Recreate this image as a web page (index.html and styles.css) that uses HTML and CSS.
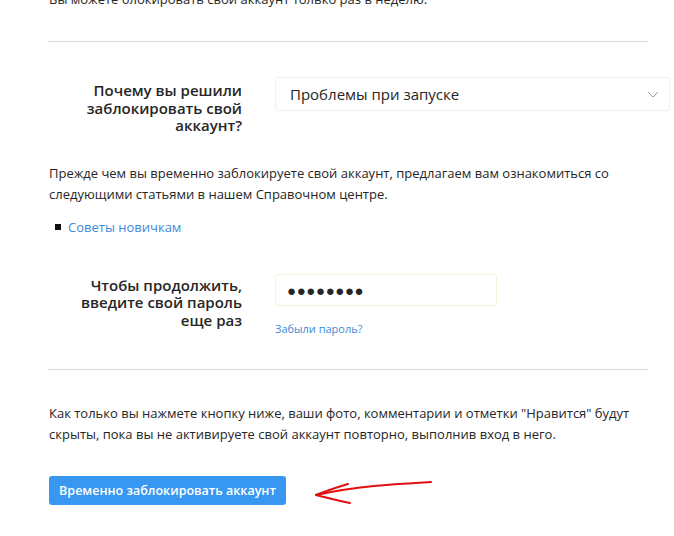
FILE: index.html
```html
<!DOCTYPE html>
<html lang="ru">
<head>
<meta charset="utf-8">
<link rel="stylesheet" href="styles.css">
</head>
<body>
<div class="page">
  <p class="note">Вы можете блокировать свой аккаунт только раз в неделю.</p>
  <hr class="sep sep-top">
  <div class="row row-select">
    <div class="label">Почему вы решили заблокировать свой аккаунт?</div>
    <div class="field">
      <div class="select">
        <span>Проблемы при запуске</span>
        <svg class="chev" width="12" height="7" viewBox="0 0 12 7"><path d="M1 1l5 5 5-5" fill="none" stroke="#999" stroke-width="1"/></svg>
      </div>
    </div>
  </div>
  <p class="text text-help">Прежде чем вы временно заблокируете свой аккаунт, предлагаем вам ознакомиться со следующими статьями в нашем Справочном центре.</p>
  <ul class="links">
    <li><span class="bullet"></span><a href="#">Советы новичкам</a></li>
  </ul>
  <div class="row row-pass">
    <div class="label">Чтобы продолжить, введите свой пароль еще раз</div>
    <div class="field">
      <div class="pass"><span class="dots">●●●●●●●●</span></div>
      <a class="forgot" href="#">Забыли пароль?</a>
    </div>
  </div>
  <hr class="sep sep-bottom">
  <p class="text text-warn">Как только вы нажмете кнопку ниже, ваши фото, комментарии и отметки "Нравится" будут скрыты, пока вы не активируете свой аккаунт повторно, выполнив вход в него.</p>
  <div class="actions">
    <button class="btn">Временно заблокировать аккаунт</button>
    <svg class="arrow" width="130" height="30" viewBox="0 0 130 30">
      <path d="M2 24 C 20 20, 40 17, 60 15 C 80 13, 100 12, 117 11" fill="none" stroke="#e01010" stroke-width="2" stroke-linecap="round"/>
      <path d="M2 24 C 12 20, 24 16, 34 13" fill="none" stroke="#e01010" stroke-width="2" stroke-linecap="round"/>
      <path d="M2 24 C 14 27, 26 30, 36 32" fill="none" stroke="#e01010" stroke-width="2" stroke-linecap="round"/>
    </svg>
  </div>
</div>
</body>
</html>
```
FILE: styles.css
```css
html, body {
  margin: 0;
  padding: 0;
  background: #fff;
}
body {
  font-family: "Open Sans", "Noto Sans", sans-serif;
  color: #262626;
  font-size: 13px;
}
.page {
  width: 621px;
  margin: -11px 0 0 49px;
}
.note {
  margin: 0;
  font-size: 13px;
  line-height: 20px;
}
.sep {
  border: 0;
  border-top: 1px solid #dbdbdb;
  width: 600px;
  margin: 0 0 0 -1px;
}
.sep-top { margin-top: 32px; }
.row {
  display: grid;
  grid-template-columns: 193px 1fr;
  column-gap: 33px;
}
.label {
  text-align: right;
  font-weight: 600;
  font-size: 15px;
  line-height: 17.5px;
  color: #262626;
}
.row-select { margin-top: 40px; }
.select {
  height: 32px;
  border: 1px solid #efefef;
  border-radius: 3px;
  display: flex;
  align-items: center;
  justify-content: space-between;
  padding: 0 10px 0 14px;
  font-size: 15px;
  color: #262626;
  margin-top: -5px;
}
.chev { display: block; }
.text {
  margin: 0;
  font-size: 13px;
  line-height: 21px;
  color: #262626;
}
.text-help { margin-top: 28px; }
.links {
  list-style: none;
  margin: 12px 0 0 0;
  padding: 0 0 0 6px;
}
.links li {
  display: flex;
  align-items: center;
  gap: 7px;
  line-height: 20px;
}
.bullet {
  width: 6px;
  height: 6px;
  background: #111;
}
a {
  color: #3d8ad6;
  text-decoration: none;
}
.row-pass { margin-top: 39px; }
.row-pass .label { padding-top: 1px; }
.pass {
  width: 222px;
  height: 32px;
  box-sizing: border-box;
  border: 1px solid #f5f3dc;
  border-radius: 3px;
  display: flex;
  align-items: center;
  padding-left: 11px;
  margin-top: -2px;
}
.dots {
  font-size: 15px;
  letter-spacing: 0.6px;
  color: #262626;
}
.forgot {
  display: block;
  font-size: 11px;
  margin-top: 15px;
}
.sep-bottom { margin-top: 33px; }
.text-warn { margin-top: 33px; }
.actions {
  display: flex;
  align-items: flex-start;
  margin-top: 31px;
}
.btn {
  font-family: inherit;
  font-size: 12.5px;
  font-weight: 600;
  color: #fff;
  background: #3897f0;
  border: 0;
  border-radius: 3px;
  height: 29px;
  padding: 0 4px;
  width: 237px;
  white-space: nowrap;
}
.arrow {
  margin-left: 28px;
  margin-top: -5px;
  overflow: visible;
}
```
